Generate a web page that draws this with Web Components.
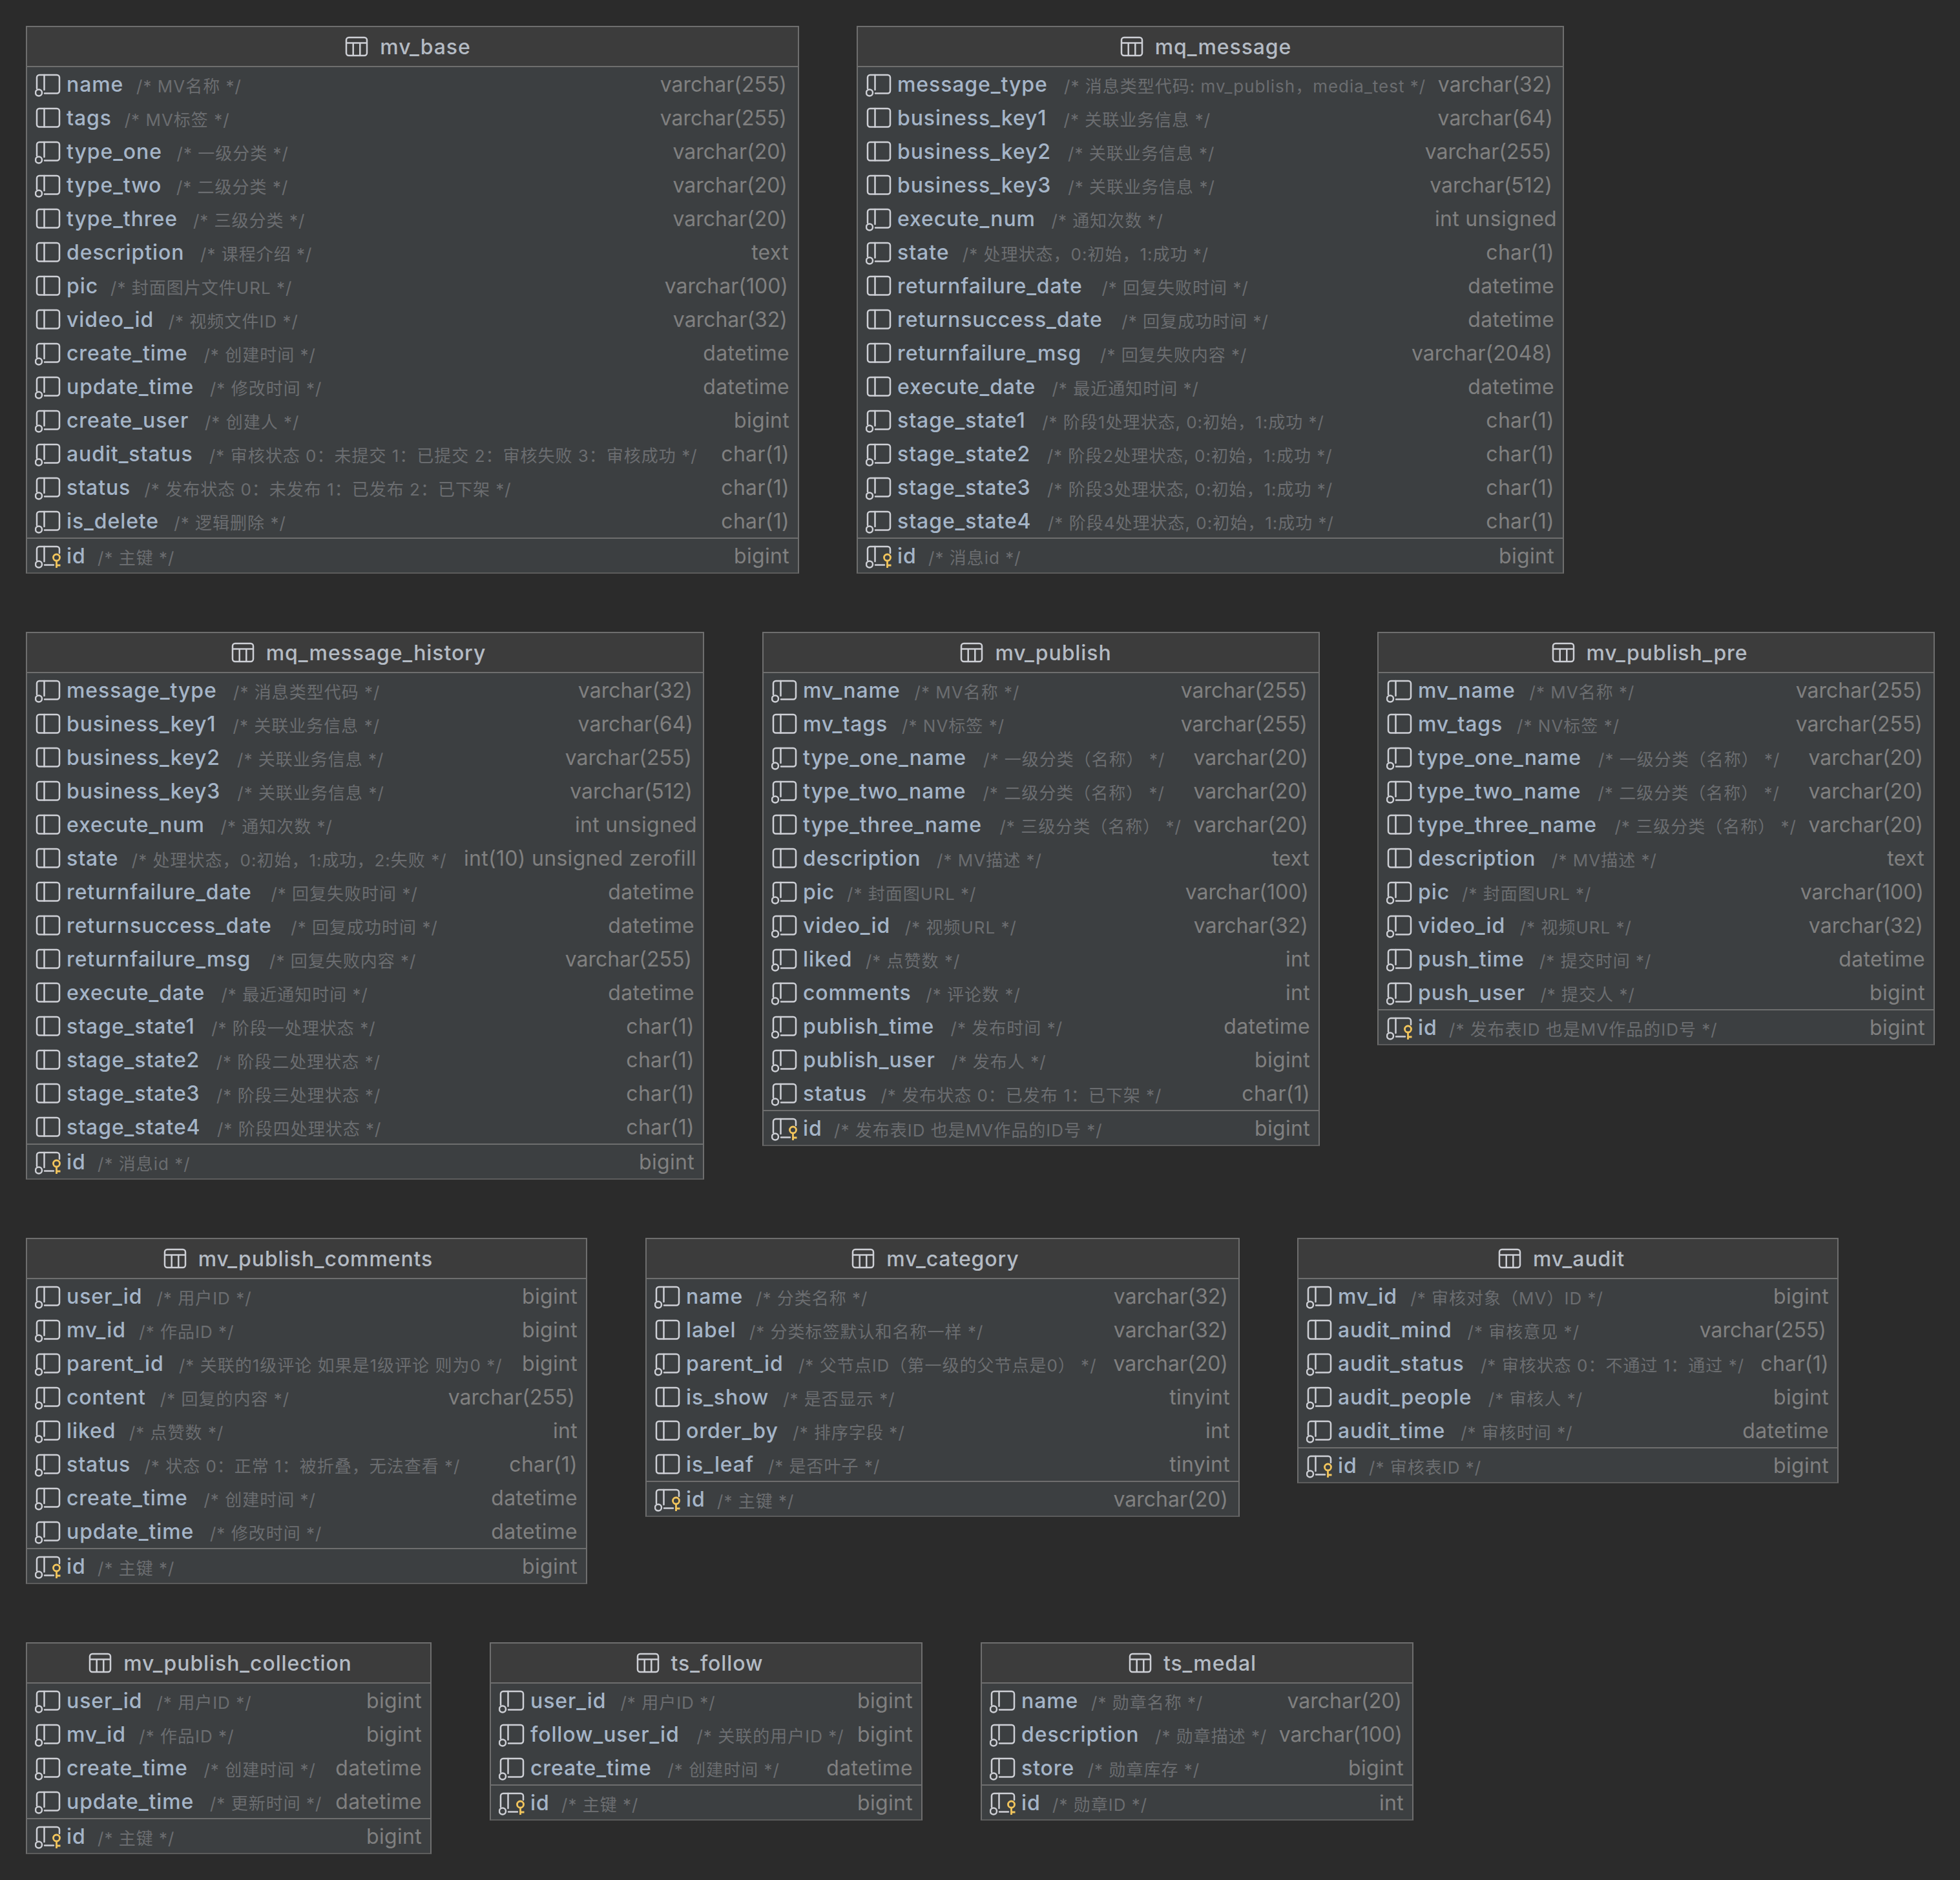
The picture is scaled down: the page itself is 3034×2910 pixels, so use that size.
<!DOCTYPE html>
<html>
<head>
<meta charset="utf-8">
<title>er diagram</title>
<style>
    html, body { margin: 0; padding: 0; background: #2b2b2b; }
</style>
</head>
<body>
<er-diagram>
    <db-table name="mv_base" x="40" y="40" w="1197">
        <db-column name="name" type="varchar(255)" idx>MV名称</db-column>
        <db-column name="tags" type="varchar(255)">MV标签</db-column>
        <db-column name="type_one" type="varchar(20)" idx>一级分类</db-column>
        <db-column name="type_two" type="varchar(20)" idx>二级分类</db-column>
        <db-column name="type_three" type="varchar(20)">三级分类</db-column>
        <db-column name="description" type="text">课程介绍</db-column>
        <db-column name="pic" type="varchar(100)">封面图片文件URL</db-column>
        <db-column name="video_id" type="varchar(32)">视频文件ID</db-column>
        <db-column name="create_time" type="datetime" idx>创建时间</db-column>
        <db-column name="update_time" type="datetime" idx>修改时间</db-column>
        <db-column name="create_user" type="bigint" idx>创建人</db-column>
        <db-column name="audit_status" type="char(1)" idx>审核状态 0：未提交 1：已提交 2：审核失败 3：审核成功</db-column>
        <db-column name="status" type="char(1)" idx>发布状态 0：未发布 1：已发布 2：已下架</db-column>
        <db-column name="is_delete" type="char(1)" idx>逻辑删除</db-column>
        <db-column name="id" type="bigint" idx pk>主键</db-column>
    </db-table>
    <db-table name="mq_message" x="1326" y="40" w="1095">
        <db-column name="message_type" type="varchar(32)" idx>消息类型代码: mv_publish，media_test</db-column>
        <db-column name="business_key1" type="varchar(64)">关联业务信息</db-column>
        <db-column name="business_key2" type="varchar(255)">关联业务信息</db-column>
        <db-column name="business_key3" type="varchar(512)">关联业务信息</db-column>
        <db-column name="execute_num" type="int unsigned" idx>通知次数</db-column>
        <db-column name="state" type="char(1)" idx>处理状态，0:初始，1:成功</db-column>
        <db-column name="returnfailure_date" type="datetime">回复失败时间</db-column>
        <db-column name="returnsuccess_date" type="datetime">回复成功时间</db-column>
        <db-column name="returnfailure_msg" type="varchar(2048)">回复失败内容</db-column>
        <db-column name="execute_date" type="datetime">最近通知时间</db-column>
        <db-column name="stage_state1" type="char(1)" idx>阶段1处理状态, 0:初始，1:成功</db-column>
        <db-column name="stage_state2" type="char(1)" idx>阶段2处理状态, 0:初始，1:成功</db-column>
        <db-column name="stage_state3" type="char(1)" idx>阶段3处理状态, 0:初始，1:成功</db-column>
        <db-column name="stage_state4" type="char(1)" idx>阶段4处理状态, 0:初始，1:成功</db-column>
        <db-column name="id" type="bigint" idx pk>消息id</db-column>
    </db-table>
    <db-table name="mq_message_history" x="40" y="978" w="1050" pad="20">
        <db-column name="message_type" type="varchar(32)" idx>消息类型代码</db-column>
        <db-column name="business_key1" type="varchar(64)">关联业务信息</db-column>
        <db-column name="business_key2" type="varchar(255)">关联业务信息</db-column>
        <db-column name="business_key3" type="varchar(512)">关联业务信息</db-column>
        <db-column name="execute_num" type="int unsigned">通知次数</db-column>
        <db-column name="state" type="int(10) unsigned zerofill">处理状态，0:初始，1:成功，2:失败</db-column>
        <db-column name="returnfailure_date" type="datetime">回复失败时间</db-column>
        <db-column name="returnsuccess_date" type="datetime">回复成功时间</db-column>
        <db-column name="returnfailure_msg" type="varchar(255)">回复失败内容</db-column>
        <db-column name="execute_date" type="datetime">最近通知时间</db-column>
        <db-column name="stage_state1" type="char(1)">阶段一处理状态</db-column>
        <db-column name="stage_state2" type="char(1)">阶段二处理状态</db-column>
        <db-column name="stage_state3" type="char(1)">阶段三处理状态</db-column>
        <db-column name="stage_state4" type="char(1)">阶段四处理状态</db-column>
        <db-column name="id" type="bigint" idx pk>消息id</db-column>
    </db-table>
    <db-table name="mv_publish" x="1180" y="978" w="863" pad="16">
        <db-column name="mv_name" type="varchar(255)" idx>MV名称</db-column>
        <db-column name="mv_tags" type="varchar(255)">NV标签</db-column>
        <db-column name="type_one_name" type="varchar(20)" idx>一级分类（名称）</db-column>
        <db-column name="type_two_name" type="varchar(20)" idx>二级分类（名称）</db-column>
        <db-column name="type_three_name" type="varchar(20)">三级分类（名称）</db-column>
        <db-column name="description" type="text">MV描述</db-column>
        <db-column name="pic" type="varchar(100)" idx>封面图URL</db-column>
        <db-column name="video_id" type="varchar(32)" idx>视频URL</db-column>
        <db-column name="liked" type="int" idx>点赞数</db-column>
        <db-column name="comments" type="int" idx>评论数</db-column>
        <db-column name="publish_time" type="datetime" idx>发布时间</db-column>
        <db-column name="publish_user" type="bigint" idx>发布人</db-column>
        <db-column name="status" type="char(1)" idx>发布状态 0：已发布 1：已下架</db-column>
        <db-column name="id" type="bigint" idx pk>发布表ID 也是MV作品的ID号</db-column>
    </db-table>
    <db-table name="mv_publish_pre" x="2132" y="978" w="863" pad="20">
        <db-column name="mv_name" type="varchar(255)" idx>MV名称</db-column>
        <db-column name="mv_tags" type="varchar(255)">NV标签</db-column>
        <db-column name="type_one_name" type="varchar(20)" idx>一级分类（名称）</db-column>
        <db-column name="type_two_name" type="varchar(20)" idx>二级分类（名称）</db-column>
        <db-column name="type_three_name" type="varchar(20)">三级分类（名称）</db-column>
        <db-column name="description" type="text">MV描述</db-column>
        <db-column name="pic" type="varchar(100)" idx>封面图URL</db-column>
        <db-column name="video_id" type="varchar(32)" idx>视频URL</db-column>
        <db-column name="push_time" type="datetime" idx>提交时间</db-column>
        <db-column name="push_user" type="bigint" idx>提交人</db-column>
        <db-column name="id" type="bigint" idx pk>发布表ID 也是MV作品的ID号</db-column>
    </db-table>
    <db-table name="mv_publish_comments" x="40" y="1916" w="869" pad="26">
        <db-column name="user_id" type="bigint" idx>用户ID</db-column>
        <db-column name="mv_id" type="bigint" idx>作品ID</db-column>
        <db-column name="parent_id" type="bigint" idx>关联的1级评论 如果是1级评论 则为0</db-column>
        <db-column name="content" type="varchar(255)" idx>回复的内容</db-column>
        <db-column name="liked" type="int" idx>点赞数</db-column>
        <db-column name="status" type="char(1)" idx>状态 0：正常 1：被折叠，无法查看</db-column>
        <db-column name="create_time" type="datetime" idx>创建时间</db-column>
        <db-column name="update_time" type="datetime" idx>修改时间</db-column>
        <db-column name="id" type="bigint" idx pk>主键</db-column>
    </db-table>
    <db-table name="mv_category" x="999" y="1916" w="920" pad="22">
        <db-column name="name" type="varchar(32)" idx>分类名称</db-column>
        <db-column name="label" type="varchar(32)">分类标签默认和名称一样</db-column>
        <db-column name="parent_id" type="varchar(20)" idx>父节点ID（第一级的父节点是0）</db-column>
        <db-column name="is_show" type="tinyint">是否显示</db-column>
        <db-column name="order_by" type="int">排序字段</db-column>
        <db-column name="is_leaf" type="tinyint">是否叶子</db-column>
        <db-column name="id" type="varchar(20)" idx pk>主键</db-column>
    </db-table>
    <db-table name="mv_audit" x="2008" y="1916" w="838" pad="20">
        <db-column name="mv_id" type="bigint" idx>审核对象（MV）ID</db-column>
        <db-column name="audit_mind" type="varchar(255)">审核意见</db-column>
        <db-column name="audit_status" type="char(1)" idx>审核状态 0：不通过 1：通过</db-column>
        <db-column name="audit_people" type="bigint" idx>审核人</db-column>
        <db-column name="audit_time" type="datetime" idx>审核时间</db-column>
        <db-column name="id" type="bigint" idx pk>审核表ID</db-column>
    </db-table>
    <db-table name="mv_publish_collection" x="40" y="2542" w="628" pad="26">
        <db-column name="user_id" type="bigint" idx>用户ID</db-column>
        <db-column name="mv_id" type="bigint" idx>作品ID</db-column>
        <db-column name="create_time" type="datetime" idx>创建时间</db-column>
        <db-column name="update_time" type="datetime" idx>更新时间</db-column>
        <db-column name="id" type="bigint" idx pk>主键</db-column>
    </db-table>
    <db-table name="ts_follow" x="758" y="2542" w="670" pad="20">
        <db-column name="user_id" type="bigint" idx>用户ID</db-column>
        <db-column name="follow_user_id" type="bigint" idx>关联的用户ID</db-column>
        <db-column name="create_time" type="datetime" idx>创建时间</db-column>
        <db-column name="id" type="bigint" idx pk>主键</db-column>
    </db-table>
    <db-table name="ts_medal" x="1518" y="2542" w="670">
        <db-column name="name" type="varchar(20)" idx>勋章名称</db-column>
        <db-column name="description" type="varchar(100)" idx>勋章描述</db-column>
        <db-column name="store" type="bigint" idx>勋章库存</db-column>
        <db-column name="id" type="int" idx pk>勋章ID</db-column>
    </db-table>
</er-diagram>

<script>
// Each type's text ends a little differently in the reference, keyed here as right padding
const typeInset = {
    'varchar(255)': 19, 'varchar(100)': 17, 'varchar(64)': 17, 'varchar(32)': 18,
    'varchar(20)': 18, 'varchar(512)': 18, 'varchar(2048)': 18, 'int unsigned': 11,
    'int(10) unsigned zerofill': 12, 'datetime': 15, 'bigint': 15, 'char(1)': 15,
    'text': 16, 'int': 15, 'tinyint': 15
};

class ErDiagram extends HTMLElement {
    constructor() {
        super();
        this.attachShadow({ mode: 'open' }).innerHTML = `
            <style>
                :host {
                    display: block;
                    position: relative;
                    width: 3034px;
                    height: 2910px;
                    overflow: hidden;
                    background: #2b2b2b;
                }
            </style>
            <slot></slot>
        `;
    }
}

class DbTable extends HTMLElement {
    constructor() {
        super();
        this.attachShadow({ mode: 'open' });
    }

    connectedCallback() {
        // tables sit on a free canvas, so their place comes from the markup
        this.style.left = this.getAttribute('x') + 'px';
        this.style.top = this.getAttribute('y') + 'px';
        this.style.width = this.getAttribute('w') + 'px';
        const pad = this.getAttribute('pad') || 14;
        this.shadowRoot.innerHTML = `
            <style>
                :host {
                    display: block;
                    position: absolute;
                    box-sizing: border-box;
                    background: #3c3f41;
                    border: 2px solid #6e6e6e;
                    border-bottom-color: #5c5c5c;
                    font-family: Inter, "Noto Sans CJK SC", sans-serif;
                }

                .header {
                    display: flex;
                    align-items: center;
                    justify-content: center;
                    gap: 18px;
                    height: 60px;
                    padding-right: ${pad}px;
                    background: #3c3c3c;
                    border-bottom: 2px solid #6e6e6e;
                    color: #b4bbc4;
                    font-size: 32px;
                    font-weight: 500;
                    letter-spacing: 0.9px;
                    white-space: nowrap;
                }

                svg { display: block; flex: none; }
            </style>
            <div class="header">
                <svg width="36" height="32" viewBox="0 0 36 32" fill="none" stroke="#ced0d6" stroke-width="2.5">
                    <rect x="2" y="2" width="32" height="28" rx="4"/>
                    <path d="M2 10.5H34M12.7 10.5V30M23.3 10.5V30"/>
                </svg>
                <span>${this.getAttribute('name')}</span>
            </div>
            <slot></slot>
        `;
    }
}

class DbColumn extends HTMLElement {
    constructor() {
        super();
        this.attachShadow({ mode: 'open' });
    }

    connectedCallback() {
        const name = this.getAttribute('name');
        const type = this.getAttribute('type');
        const inset = typeInset[type] || 15;
        // the gap before the comment grows slowly with the length of the name
        const noteGap = 17 + name.length * 0.7;
        const typeSpacing = type.startsWith('varchar') ? 0 : 0.3;
        this.shadowRoot.innerHTML = `
            <style>
                :host {
                    display: flex;
                    align-items: center;
                    height: 52px;
                    padding: 0 ${inset - 2}px 0 12px;
                    white-space: nowrap;
                    font-family: Inter, "Noto Sans CJK SC", sans-serif;
                }

                :host([pk]) {
                    border-top: 2px solid #6e6e6e;
                }

                .icon { flex: none; margin-right: 7px; display: block; }
                .name { color: #a5b5c8; font-size: 32px; font-weight: 500; letter-spacing: 0.9px; }
                .note {
                    color: #6b6d70;
                    font-size: 26px;
                    letter-spacing: 1px;
                    margin-left: ${noteGap}px;
                    padding-top: 3px;
                }
                .type {
                    color: #808080;
                    font-size: 32px;
                    letter-spacing: ${typeSpacing}px;
                    margin-left: auto;
                    padding-left: 10px;
                }
            </style>
            ${this.renderIcon()}
            <span class="name">${name}</span>
            <span class="note">/* <slot></slot> */</span>
            <span class="type">${type}</span>
        `;
    }

    renderIcon() {
        const stroke = 'fill="none" stroke="#ced0d6" stroke-width="2.5" stroke-linecap="round"';
        let body;
        if (this.hasAttribute('pk')) {
            body = `
                <path ${stroke} d="M3 27V10a4 4 0 0 1 4-4H34a4 4 0 0 1 4 4v6"/>
                <path ${stroke} d="M14.5 6V29M15 34.5H29"/>
                <circle ${stroke} cx="6" cy="33.5" r="5"/>
                <g fill="none" stroke="#f2c55c" stroke-width="2.8">
                    <circle cx="33.5" cy="23" r="5"/>
                    <path d="M33.5 28V39M33.5 35H39.5"/>
                </g>`;
        } else if (this.hasAttribute('idx')) {
            body = `
                <path ${stroke} d="M3 27V10a4 4 0 0 1 4-4H34a4 4 0 0 1 4 4V30.5a4 4 0 0 1-4 4H15"/>
                <path ${stroke} d="M14.5 6V29"/>
                <circle ${stroke} cx="6" cy="33.5" r="5"/>`;
        } else {
            body = `
                <rect ${stroke} x="3" y="6" width="35" height="28.5" rx="4"/>
                <path ${stroke} d="M14.5 6V34.5"/>`;
        }
        return `<svg class="icon" width="42" height="40" viewBox="0 0 42 40">${body}</svg>`;
    }
}

customElements.define('er-diagram', ErDiagram);
customElements.define('db-table', DbTable);
customElements.define('db-column', DbColumn);
</script>
</body>
</html>
